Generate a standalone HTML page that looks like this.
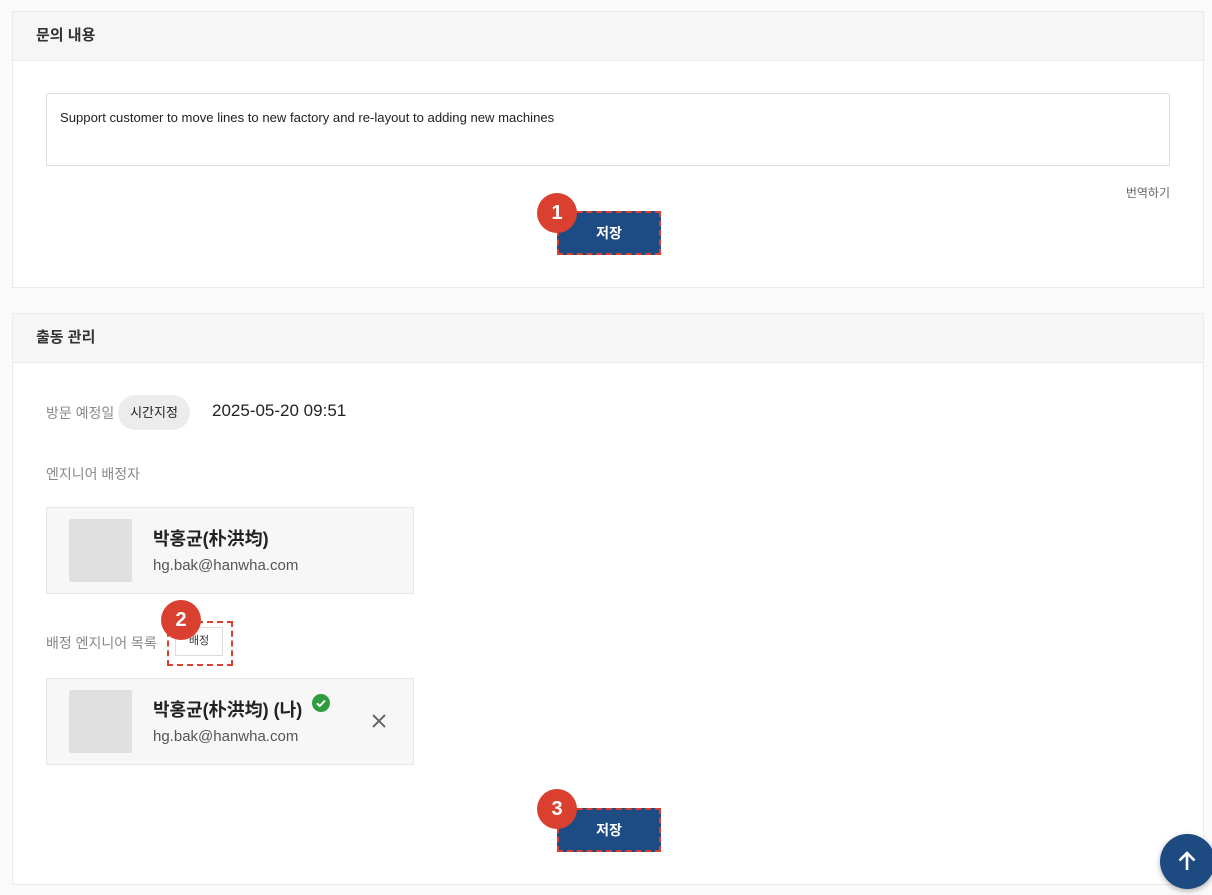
<!DOCTYPE html>
<html><head><meta charset="utf-8"><style>
*{margin:0;padding:0;box-sizing:border-box}
body{width:1212px;height:895px;background:#fafafa;font-family:"Liberation Sans","Noto Sans CJK KR",sans-serif;position:relative;overflow:hidden;color:#222}
.a{position:absolute}
.panel{position:absolute;left:12px;width:1192px;background:#fff;border:1px solid #ebebeb}
.hd{height:49px;background:#f6f6f6;border-bottom:1px solid #ebebeb;padding-left:23px;line-height:48px;font-size:15px;font-weight:bold;color:#333}
.btn{position:absolute;width:104px;height:44px;background:#1d4c85;border:2px dashed #d9402f;color:#fff;font-size:14px;font-weight:bold;text-align:center;line-height:40px}
.badge{position:absolute;width:40px;height:40px;border-radius:50%;background:#d9402f;color:#fff;font-weight:bold;font-size:20px;text-align:center;line-height:40px}
.lbl{position:absolute;font-size:14px;color:#888}
.card{position:absolute;left:46px;width:368px;height:87px;background:#f7f7f7;border:1px solid #e6e6e6}
.av{position:absolute;left:22px;top:11px;width:63px;height:63px;background:#e0e0e1;border-radius:2px}
.nm{position:absolute;left:106px;top:17px;font-size:18px;font-weight:bold;color:#222}
.em{position:absolute;left:106px;top:49px;font-size:15px;color:#555}
</style></head><body>
<div class="panel" style="top:11px;height:277px">
<div class="hd">문의 내용</div>
</div>
<div class="a" style="left:46px;top:93px;width:1124px;height:73px;border:1px solid #ddd;background:#fff;border-radius:2px;padding:16px 13px;font-size:13.1px;color:#222">Support customer to move lines to new factory and re-layout to adding new machines</div>
<div class="a" style="left:1100px;top:184px;width:70px;text-align:right;font-size:12px;color:#666">번역하기</div>
<div class="btn" style="left:557px;top:211px">저장</div>
<div class="badge" style="left:537px;top:193px">1</div>

<div class="panel" style="top:313px;height:572px">
<div class="hd">출동 관리</div>
</div>
<div class="lbl" style="left:46px;top:403px">방문 예정일</div>
<div class="a" style="left:118px;top:395px;width:72px;height:35px;border-radius:18px;background:#ececec;font-size:13px;text-align:center;line-height:35px;color:#222">시간지정</div>
<div class="a" style="left:212px;top:401px;font-size:17px;color:#222">2025-05-20 09:51</div>
<div class="lbl" style="left:46px;top:464px">엔지니어 배정자</div>
<div class="card" style="top:507px"><div class="av"></div><div class="nm">박홍균(朴洪均)</div><div class="em">hg.bak@hanwha.com</div></div>
<div class="lbl" style="left:46px;top:633px">배정 엔지니어 목록</div>
<div class="a" style="left:167px;top:621px;width:66px;height:45px;border:2px dashed #d9402f"></div>
<div class="a" style="left:175px;top:627px;width:48px;height:29px;border:1px solid #ddd;background:#fff;font-size:11px;text-align:center;line-height:27px;color:#333">배정</div>
<div class="badge" style="left:161px;top:600px">2</div>
<div class="card" style="top:678px"><div class="av"></div><div class="nm">박홍균(朴洪均) (나)</div><div class="em">hg.bak@hanwha.com</div>
<svg class="a" style="left:265px;top:15px" width="18" height="18" viewBox="0 0 18 18"><circle cx="9" cy="9" r="9" fill="#2e9c3f"/><path d="M5 9.3l2.8 2.7L13 6.5" stroke="#fff" stroke-width="2" fill="none"/></svg>
<svg class="a" style="left:324px;top:34px" width="16" height="16" viewBox="0 0 16 16"><path d="M2 2L14 14M14 2L2 14" stroke="#666" stroke-width="2"/></svg>
</div>
<div class="btn" style="left:557px;top:808px">저장</div>
<div class="badge" style="left:537px;top:789px">3</div>
<div class="a" style="left:1160px;top:834px;width:55px;height:55px;border-radius:50%;background:#1d4a80;box-shadow:0 2px 6px rgba(0,0,0,.3)">
<svg class="a" style="left:16px;top:16px" width="22" height="22" viewBox="0 0 22 22"><path d="M11 20V3M3.5 10.5L11 3l7.5 7.5" stroke="#fff" stroke-width="2.6" fill="none"/></svg>
</div>
</body></html>
